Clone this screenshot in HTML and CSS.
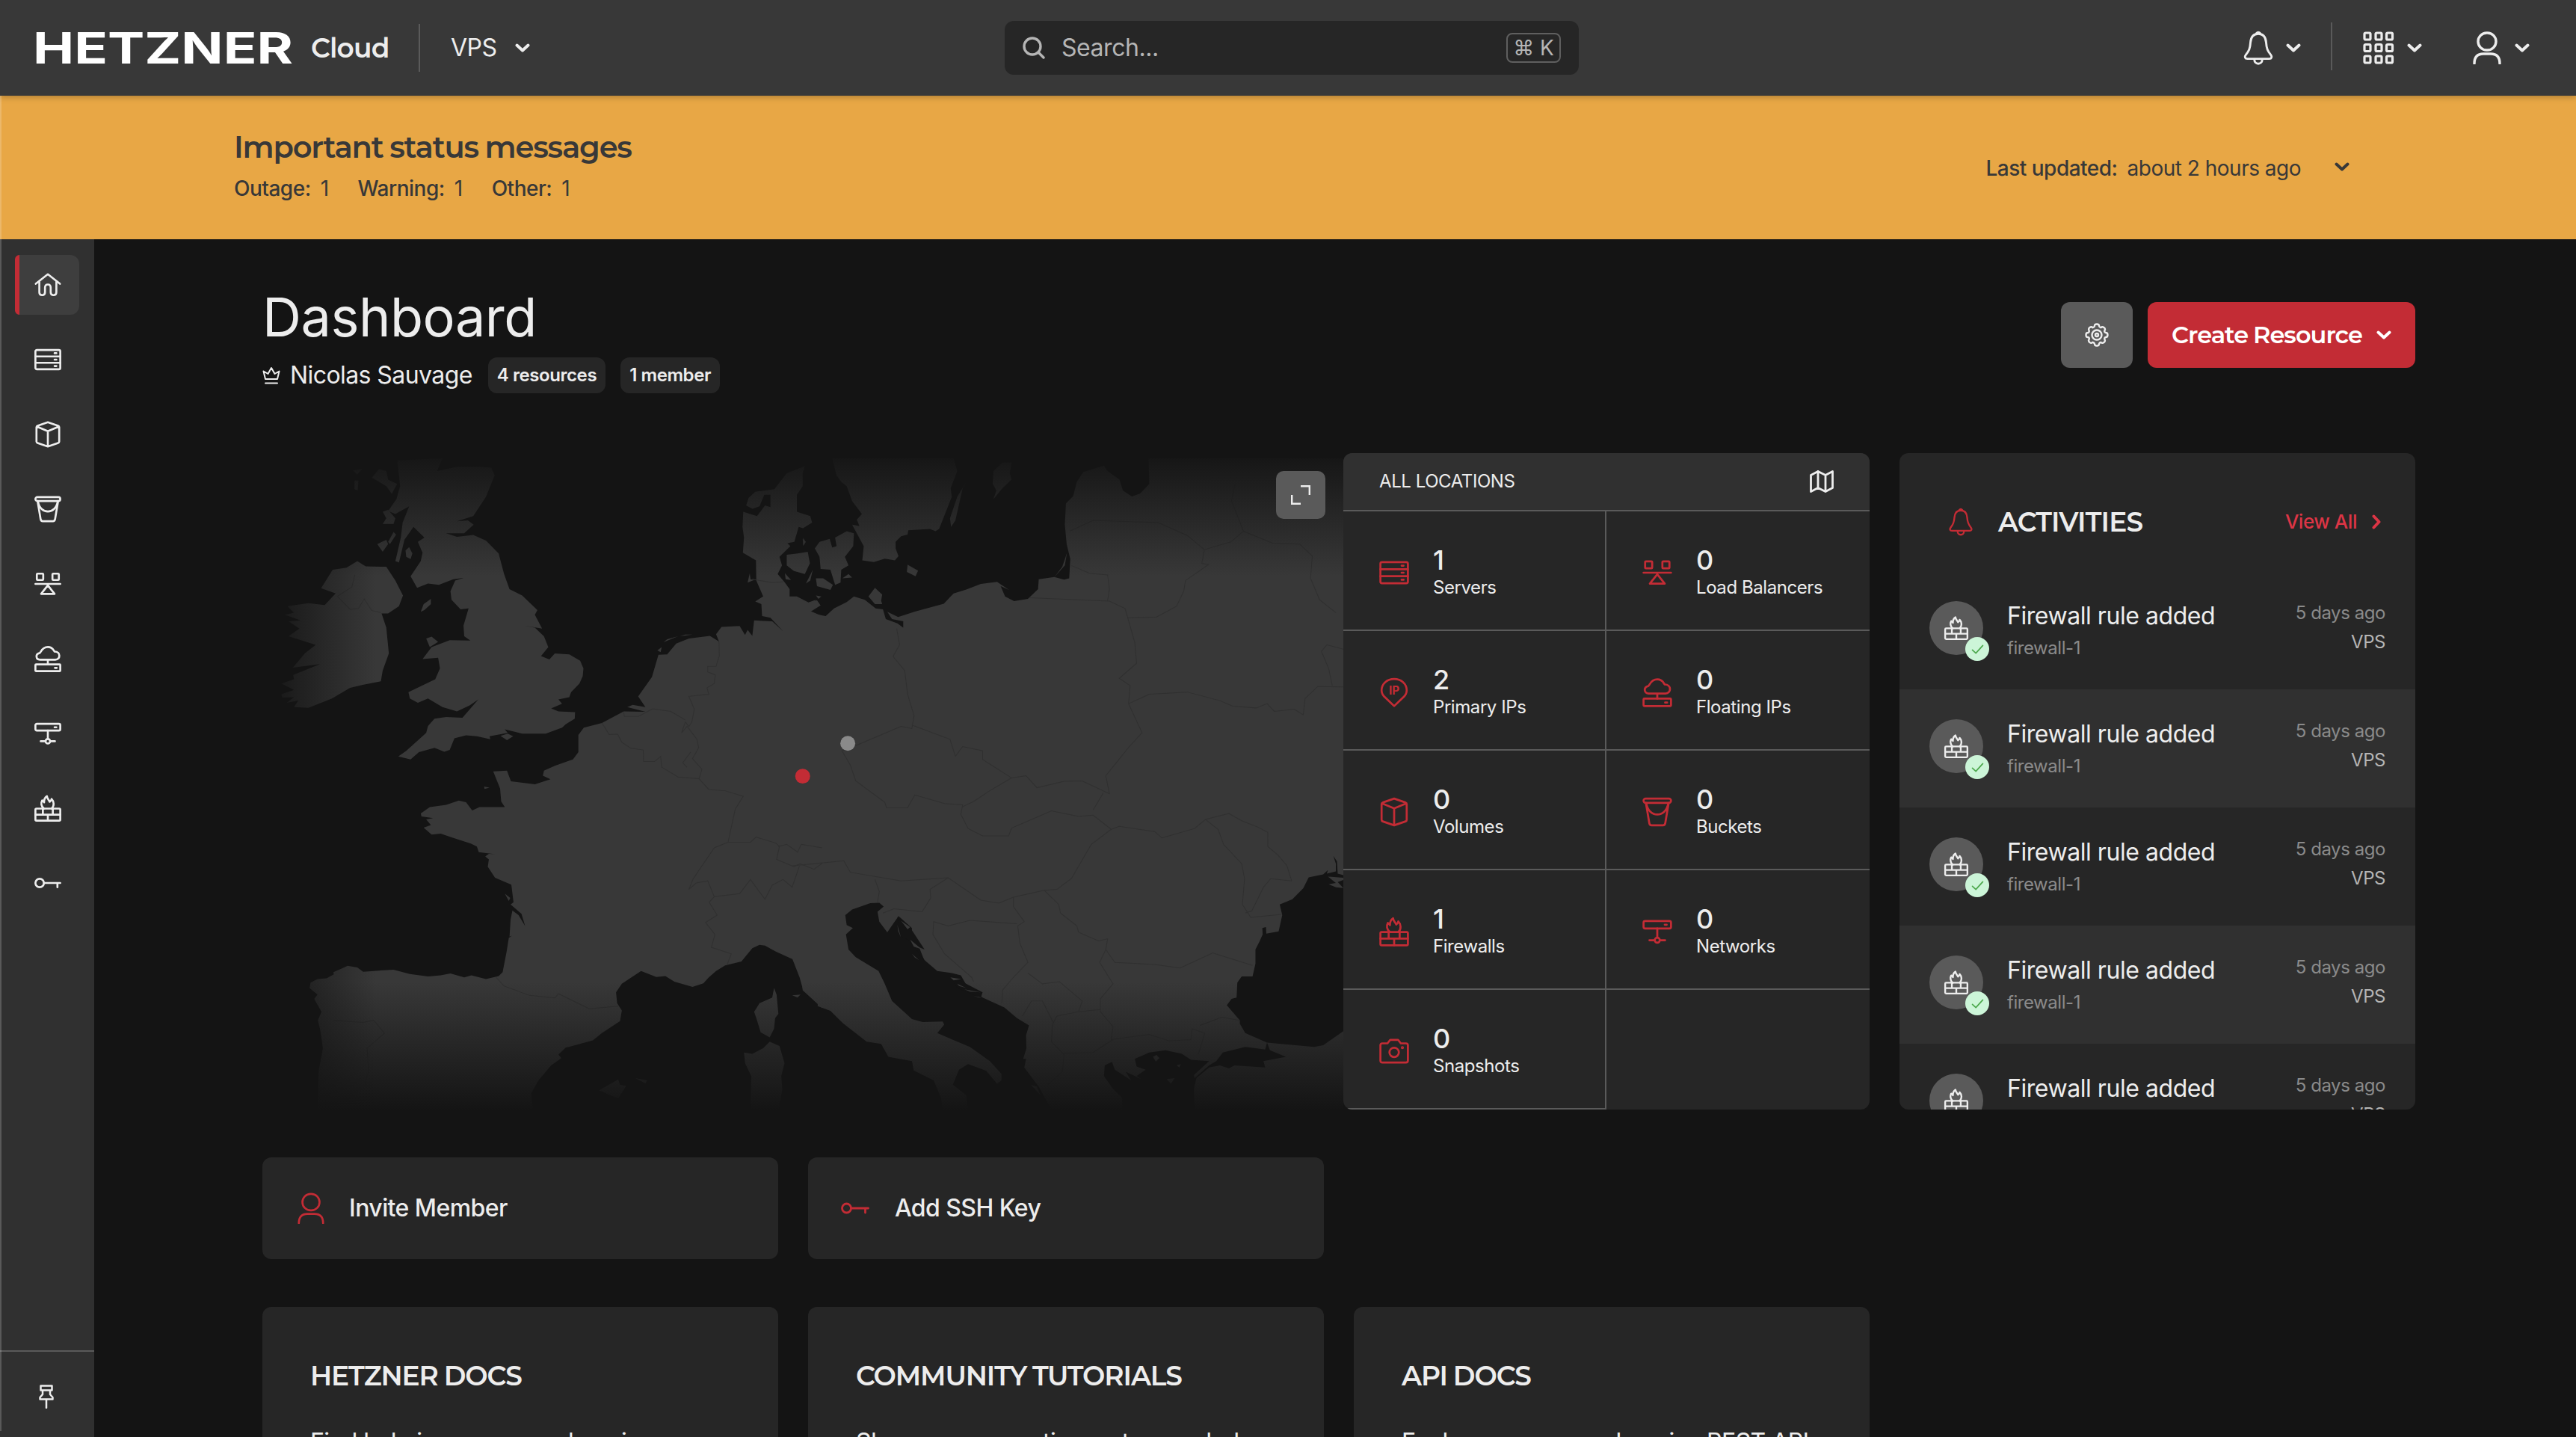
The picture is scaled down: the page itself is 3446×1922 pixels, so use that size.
FILE: index.html
```html
<!DOCTYPE html>
<html lang="en">
<head>
<meta charset="utf-8">
<title>Hetzner Cloud</title>
<link rel="stylesheet" href="styles.css">
</head>
<body>
<svg class="sprite" aria-hidden="true">
  <symbol id="chevron" viewBox="0 0 20 12"><path d="M2.5 2.5 10 9.5l7.500-7" stroke-width="4"/></symbol>
  <symbol id="home" viewBox="0 0 40 40"><path d="M3 18.500 20 5l17 13.500M8 15v15.500q0 4 4 4 4 0 4-4V24q0-4.500 4-4.500t4 4.500v6.500q0 4 4 4 4 0 4-4V15"/></symbol>
  <symbol id="server" viewBox="0 0 40 40"><rect x="2.500" y="6.500" width="35" height="27" rx="2"/><path d="M2.500 15.500h35M2.500 24.500h35M29.500 11h2.500M29.500 20h2.500M29.500 29h2.500"/></symbol>
  <symbol id="cube" viewBox="0 0 40 40"><path d="M20 3 34.500 8q1.500.6 1.500 2v20q0 1.500-1.500 2L20 37 5.500 32Q4 31.500 4 30V10q0-1.400 1.500-2ZM4.500 9 20 15.500 35.500 9M20 15.500V37"/></symbol>
  <symbol id="bucket" viewBox="0 0 40 40"><rect x="2.500" y="3" width="35" height="5.500" rx="2.700"/><path d="m5.500 8.500 4.300 25.500q.5 3 3 3h14.400q2.500 0 3-3l4.300-25.500M6 9c3 19 25 19 28 0"/></symbol>
  <symbol id="balancer" viewBox="0 0 40 40"><rect x="4.500" y="5.500" width="9" height="9" rx="1"/><rect x="26.500" y="5.500" width="9" height="9" rx="1"/><path d="M2.500 20h35M20 22 10.500 34h19Z"/></symbol>
  <symbol id="cloud" viewBox="0 0 40 40"><path d="M9 21.500c-6 0-7-8-.5-9.500 2-1 3-8.500 11.500-8.500 7 0 8 5 9.500 6.500 9 0 8.500 11.500 1 11.500ZM20 21.500V28M30 33h2.500"/><rect x="2.500" y="28" width="35" height="9.500" rx="1"/></symbol>
  <symbol id="network" viewBox="0 0 40 40"><rect x="2.500" y="6.500" width="35" height="9.500" rx="2"/><path d="M29.500 11.300H32M20 16v11.500M10 31h6.500M23.500 31H30"/><circle cx="20" cy="31" r="3.200"/></symbol>
  <symbol id="firewall" viewBox="0 0 40 40"><rect x="2.500" y="20.500" width="35" height="17" rx="1.500"/><path d="M2.500 29h35M13 20.500V29M27 20.500V29M20 29v8.500M14.500 20.500c-4-3-4.500-8-2.500-11.500 1 .5 2 1.500 2.700 2.800C14.500 8 16.500 4.500 18.700 3c0 3.500 2.800 5 4 8 1.500-1 2.400-2.500 2.600-4 3.500 3.500 4 9.500.2 13.500"/></symbol>
  <symbol id="key" viewBox="0 0 40 40"><circle cx="8.500" cy="20" r="6"/><path d="M14.500 20h23M33.500 20.500V26"/></symbol>
  <symbol id="bell" viewBox="0 0 40 44"><path d="M20 4c-7 0-9.500 5-10 11-.5 8-2 11-6 16-2 2.500-1 5 2 5h28c3 0 4-2.500 2-5-4-5-5.500-8-6-16-.5-6-3-11-10-11Zm-2.500-.5Q20 .5 22.500 3.500M15 37c0 7 10 7 10 0"/></symbol>
  <symbol id="user" viewBox="0 0 38 44"><rect x="7" y="2" width="24" height="23" rx="11.500"/><path d="M2 43c0-9 4-13 12-13h10c8 0 12 4 12 13"/></symbol>
  <symbol id="grid" viewBox="0 0 42 44"><g id="grid-row"><rect x="2" y="2" width="8" height="9" rx="1.500"/><rect x="17" y="2" width="8" height="9" rx="1.500"/><rect x="31.500" y="2" width="8" height="9" rx="1.500"/></g><use href="#grid-row" y="15.500"/><use href="#grid-row" y="31"/></symbol>
  <symbol id="search" viewBox="0 0 30 30"><circle cx="13" cy="13" r="11"/><path d="m21 21 7 7"/></symbol>
  <symbol id="pin" viewBox="0 0 20 32"><path d="M2.500 1.500h15v6h-15ZM5 7.500v5.500L1.500 17v2.500h17V17L15 13V7.500M10 19.500V31"/></symbol>
  <symbol id="crown" viewBox="0 0 24 24"><path d="M4 17 1.500 6.500 7.500 10 12 2l4.500 8 6-3.500L20 17ZM4 22.500h16"/></symbol>
  <symbol id="gear" viewBox="0 0 32 32"><path d="M13 4q0-2.500 3-2.500T19 4q.5 2 2.500 2.200Q23 4.500 25.500 6t.7 4.700Q25.800 12.500 28 13q2.500 0 2.500 3T28 19q-2 .5-1.800 2.300Q27.800 24.500 25.500 26t-4-.2Q19.500 26 19 28q0 2.500-3 2.500T13 28q-.5-2-2.500-2.200Q9 27.500 6.500 26t-.7-4.700Q6.200 19.500 4 19q-2.500 0-2.500-3T4 13q2-.5 1.800-2.300Q4.200 7.500 6.500 6t4 .2Q12.500 6 13 4Z"/><circle cx="16" cy="16" r="6.500"/><circle cx="16" cy="16" r="2"/></symbol>
  <symbol id="map-icon" viewBox="0 0 32 30"><path d="M1.500 6.500 11 1.500l10 5 9.500-5v22l-9.500 5-10-5-9.500 5ZM11 1.500v22M21 6.500v22"/></symbol>
  <symbol id="camera" viewBox="0 0 40 40"><path d="M5 10h6.500L15 5.500h10l3.500 4.500H35q2.500 0 2.500 2.500V32q0 2.500-2.500 2.500H5q-2.500 0-2.500-2.500V12.500Q2.500 10 5 10Z"/><circle cx="20" cy="21.500" r="6"/><circle cx="30.500" cy="15.500" r="1.200" stroke-width="1.500"/></symbol>
  <symbol id="check" viewBox="0 0 18 14"><path d="m1.500 8 5 4.500 10-11"/></symbol>
</svg>

<header class="topbar">
  <div class="brand">
    <svg class="logo" viewBox="0 0 342 42" role="img" aria-label="Hetzner"><text x="-4" y="42" textLength="348" lengthAdjust="spacingAndGlyphs">HETZNER</text></svg>
    <span class="product">Cloud</span>
    <span class="switcher">VPS <svg class="icon chevron"><use href="#chevron"/></svg></span>
  </div>
  <div class="search">
    <svg class="icon search-icon"><use href="#search"/></svg>
    <span class="placeholder">Search...</span>
    <kbd>⌘ K</kbd>
  </div>
  <div class="account">
    <svg class="icon bell"><use href="#bell"/></svg><svg class="icon chevron"><use href="#chevron"/></svg>
    <i class="separator"></i>
    <svg class="icon apps"><use href="#grid"/></svg><svg class="icon chevron"><use href="#chevron"/></svg>
    <svg class="icon profile"><use href="#user"/></svg><svg class="icon chevron"><use href="#chevron"/></svg>
  </div>
</header>

<section class="banner">
  <div>
    <h2>Important status messages</h2>
    <p class="counts"><span><b>Outage:</b>1</span><span><b>Warning:</b>1</span><span><b>Other:</b>1</span></p>
  </div>
  <p class="updated"><b>Last updated:</b>about 2 hours ago <svg class="icon chevron"><use href="#chevron"/></svg></p>
</section>

<div class="shell">
  <nav class="sidebar">
    <a class="active"><svg class="icon"><use href="#home"/></svg></a>
    <a><svg class="icon"><use href="#server"/></svg></a>
    <a><svg class="icon"><use href="#cube"/></svg></a>
    <a><svg class="icon"><use href="#bucket"/></svg></a>
    <a><svg class="icon"><use href="#balancer"/></svg></a>
    <a><svg class="icon"><use href="#cloud"/></svg></a>
    <a><svg class="icon"><use href="#network"/></svg></a>
    <a><svg class="icon"><use href="#firewall"/></svg></a>
    <a><svg class="icon"><use href="#key"/></svg></a>
    <div class="pinbar"><svg class="icon"><use href="#pin"/></svg></div>
  </nav>

  <main>
    <div class="heading">
      <div>
        <h1>Dashboard</h1>
        <div class="owner">
          <svg class="icon crown"><use href="#crown"/></svg>
          <span>Nicolas Sauvage</span>
          <em>4 resources</em><em>1 member</em>
        </div>
      </div>
      <div class="actions">
        <button class="settings"><svg class="icon"><use href="#gear"/></svg></button>
        <button class="create">Create Resource <svg class="icon chevron"><use href="#chevron"/></svg></button>
      </div>
    </div>

    <div class="overview">
      <div class="map">
        <svg class="europe" viewBox="23 28 2983 1530" preserveAspectRatio="none">
          <defs>
            <linearGradient id="fade-top" x2="0" y2="1"><stop stop-color="#141414"/><stop offset="1" stop-color="#141414" stop-opacity="0"/></linearGradient>
            <linearGradient id="fade-bottom" x2="0" y2="1"><stop stop-color="#141414" stop-opacity="0"/><stop offset="1" stop-color="#141414"/></linearGradient>
            <linearGradient id="fade-left"><stop stop-color="#141414"/><stop offset="1" stop-color="#141414" stop-opacity="0"/></linearGradient>
          </defs>
          <g class="land">
            <path d="M175 1558 178 1470 190 1415 182 1370 176 1350 186 1330 166 1300 175 1290 153 1275 156 1262 175 1254 200 1252 220 1243 219 1238 245 1228 258 1223 285 1227 301 1237 330 1235 385 1232 430 1242 480 1248 515 1245 542 1241 580 1250 600 1245 640 1254 675 1247 686 1238 697 1190 703 1158 712 1153 705 1155 708 1115 713 1094 730 1105 748 1130 738 1102 708 1080 716 1075 710 1034 665 1018 645 992 648 975 638 968 648 962 665 963 620 958 615 945 598 938 550 925 515 915 490 917 468 901 488 895 475 882 494 879 462 875 460 868 485 853 530 848 565 838 585 842 602 861 622 853 692 853 682 840 679 810 660 770 698 768 709 793 775 800 818 788 797 780 800 768 830 757 880 742 895 725 895 685 910 668 960 657 1020 630 1080 631 1030 620 1045 615 1080 620 1060 595 1098 550 1116 498 1140 497 1165 472 1200 460 1258 454 1283 467 1275 450 1290 433 1340 431 1355 452 1362 440 1375 454 1380 418 1430 420 1460 443 1425 412 1402 408 1400 380 1383 374 1405 362 1386 325 1385 278 1349 260 1352 225 1348 200 1350 165 1388 175 1410 150 1425 154 1425 125 1408 125 1395 152 1375 158 1358 150 1365 132 1383 118 1436 112 1470 75 1520 58 1514 75 1514 105 1498 125 1498 165 1535 175 1540 190 1515 203 1503 200 1491 235 1472 238 1480 245 1450 270 1457 290 1445 310 1465 330 1478 345 1478 362 1498 362 1530 376 1550 370 1535 396 1568 408 1568 1322 1540 1300 1514 1280 1512 1260 1492 1210 1440 1190 1410 1176 1395 1174 1375 1182 1345 1213 1300 1222 1275 1235 1255 1250 1240 1264 1210 1272 1160 1260 1135 1247 1110 1249 1068 1235 1015 1265 999 1285 1002 1310 1015 1327 1010 1352 960 1380 935 1397 860 1414 840 1430 848 1438 820 1455 785 1490 765 1520 770 1558Z"/>
            <path d="M395 45 520 40 505 70 560 60 625 60 655 62 664 80 640 130 605 175 560 187 590 185 606 195 580 215 530 215 560 223 605 219 640 232 675 262 690 310 705 345 740 360 782 394 775 405 795 437 745 430 775 435 800 455 812 480 792 501 815 509 830 495 870 497 900 512 909 530 907 548 898 565 875 585 870 597 840 602 850 612 820 623 840 630 886 632 885 647 860 660 850 668 805 682 740 682 692 672 700 680 650 688 652 695 615 688 585 686 553 693 540 720 525 724 498 715 455 725 432 742 398 735 420 722 475 680 480 664 498 647 530 643 575 645 619 602 595 616 560 630 520 620 480 600 452 610 430 600 426 585 500 555 513 530 508 505 465 508 490 480 540 464 597 465 580 455 578 430 592 390 570 392 545 370 542 350 555 325 578 319 550 322 510 335 480 332 450 342 432 315 460 280 465 260 452 235 470 225 440 200 415 230 400 283 390 280 405 225 410 190 428 152 390 170 370 163 393 135 403 105 400 80Z"/>
            <path d="M217 300 255 295 285 280 308 292 365 293 390 325 411 360 400 385 370 402 352 402 365 435 372 495 355 535 350 560 300 568 265 575 215 600 150 622 110 620 122 605 90 610 110 597 78 598 75 590 110 580 75 565 110 555 108 545 182 520 107 528 140 495 170 475 95 455 125 437 95 420 128 418 85 405 110 400 92 385 150 378 195 382 225 355 185 343Z"/>
            <path d="M460 398 468 380 488 368 488 380 470 394ZM475 460 490 456 508 468 485 480ZM680 687 700 682 715 688 698 697ZM325 85 345 65 365 70 370 90 395 100 380 123 365 105ZM355 165 370 160 390 180 385 193 355 193 365 180ZM340 240 365 230 370 240 355 258ZM370 235 385 212 392 218 375 240ZM418 255 428 247 437 262 432 275 420 270ZM272 68 298 65 285 78ZM277 92 288 92 286 115 277 112ZM692 1055 707 1065 703 1072ZM635 805 650 808 636 811Z"/>
            <path d="M1435 1275 1442 1290 1447 1335 1438 1345 1435 1370 1423 1390 1398 1378 1388 1350 1380 1330 1395 1310 1430 1297ZM1352 1425 1375 1428 1405 1415 1423 1400 1450 1410 1464 1450 1455 1480 1458 1510 1448 1558 1370 1558 1372 1480 1355 1450ZM952 1513 1005 1488 1010 1500 1027 1503 1005 1532 975 1522ZM1052 1485 1085 1490 1080 1497ZM1485 1292 1508 1290 1500 1297Z"/>
            <path d="M1470 265 1500 262 1528 258 1534 285 1520 310 1490 303 1470 290ZM1523 332 1542 300 1535 325ZM1465 308 1482 324 1467 322ZM1514 228 1523 235 1516 243ZM1362 330 1368 308 1370 322 1380 324ZM1113 488 1125 480 1122 492ZM1130 469 1170 455 1140 462ZM1175 455 1210 451 1190 451Z"/>
            <g transform="translate(1485.500)">
              <path d="M62 250 75 235 103 228 110 248 122 245 118 225 150 210 170 215 168 245 145 270 155 290 135 300 133 330 118 335 105 300 78 298 75 270ZM65 320 85 320 112 335 105 347 68 338ZM138 320 155 310 165 318ZM30 225 36 235 30 245ZM210 362 228 342 248 358 245 372 248 380 228 380ZM318 288 347 302 340 315 316 305ZM65 360 80 362 72 368Z"/>
              <path d="M110 40 445 40 455 70 437 110 440 130 405 205 395 210 380 205 320 208 318 218 300 222 285 235 285 250 293 268 283 278 255 274 225 282 193 278 197 245 165 195 185 198 178 183 192 170 165 140 150 105 135 95 122 80ZM480 95 470 110 450 185 438 200 435 180 455 130ZM555 70 580 50 605 50 600 75 605 90 580 110 555 135 563 115 553 100Z"/>
              <path d="M0 362 45 377 68 371 78 383 50 398 62 403 92 408 115 390 150 375 170 362 200 370 230 390 250 392 258 415 290 425 306 435 306 420 275 415 262 398 292 410 340 397 418 379 445 355 480 346 520 333 565 328 598 347 575 338 587 362 612 373 650 368 678 345 680 322 723 317 745 293 758 260 752 290 723 317 750 323 764 320 767 275 757 240 752 195 755 145 775 128 785 95 803 72 860 57 870 70 903 90 912 115 937 129 960 122 985 100 983 40 1521 40 1521 1012 1505 1008 1503 980 1493 967 1500 985 1500 1003 1475 1008 1478 1000 1465 1010 1425 1017 1410 1042 1380 1068 1345 1080 1352 1105 1342 1143 1308 1148 1307 1133 1297 1135 1298 1150 1290 1165 1278 1185 1278 1218 1270 1248 1240 1248 1228 1262 1226 1297 1212 1300 1199 1315 1235 1350 1235 1358 1250 1380 1310 1402 1305 1418 1250 1412 1188 1425 1170 1445 1150 1455 1110 1485 1108 1478 1150 1445 1100 1442 1075 1428 1030 1420 985 1425 945 1440 950 1458 975 1465 950 1480 965 1488 920 1470 935 1490 890 1465 882 1447 862 1455 860 1480 885 1510 910 1530 910 1558 715 1558 680 1505 640 1460 645 1440 637 1440 646 1415 645 1385 653 1362 620 1345 585 1320 525 1297 485 1275 475 1260 465 1245 440 1240 400 1235 365 1210 330 1165 330 1135 293 1107 262 1145 240 1120 235 1097 252 1085 240 1076 215 1077 165 1092 146 1105 150 1128 167 1135 148 1150 155 1185 175 1203 238 1235 255 1265 275 1305 330 1347 360 1354 415 1353 419 1360 400 1380 490 1412 545 1445 577 1475 577 1490 565 1498 535 1468 485 1452 460 1465 443 1500 480 1525 485 1558 415 1558 410 1530 390 1490 335 1467 330 1445 295 1440 265 1435 245 1405 205 1400 140 1357 105 1328 70 1317 70 1300 30 1280 20 1250 0 1207Z"/>
              <path d="M1521 1375 1465 1408 1440 1412 1310 1402 1318 1420 1362 1435 1300 1445 1305 1460 1220 1455 1205 1462 1180 1455 1150 1460 1115 1485 1108 1510 1110 1558 1521 1558ZM1478 1015 1521 1018 1521 1023 1505 1028 1521 1042 1500 1040 1480 1033 1500 1030ZM995 1435 1005 1431 1013 1438 1003 1446ZM1033 1487 1055 1485 1045 1498ZM1060 1455 1072 1452 1068 1460ZM658 1500 675 1505 685 1525Z"/>
            </g>
          </g>
          <g class="water" transform="translate(1485.500)">
            <path d="M290 1110 330 1140 365 1185 350 1180 365 1212 325 1165 300 1155ZM435 1245 525 1285 520 1298 455 1275Z"/>
          </g>
          <g class="land" transform="translate(1485.500)">
            <path d="M300 1118 325 1133 318 1138ZM290 1128 300 1157 292 1142ZM325 1162 358 1185 335 1178ZM330 1195 350 1210 338 1204ZM436 1250 466 1254 445 1257ZM455 1265 480 1275 460 1270ZM475 1278 520 1285 490 1283ZM500 1293 523 1297 515 1297Z"/>
          </g>
          <g class="borders">
            <path d="M278 312 270 340 230 362 265 392 288 390 304 368 325 395 350 400M1283 467 1284 500 1275 525 1252 525 1252 538 1273 545 1270 565 1250 575 1255 590 1200 595 1215 625 1208 655 1200 665 1190 655 1180 680 1195 665 1222 695 1227 715 1210 740 1236 765 1228 787M960 657 980 684 1003 683 1015 702 1040 716 1074 720 1075 747 1105 747 1122 735 1125 760 1170 783 1228 787 1255 812 1300 815 1350 828 1328 858 1308 935 1270 948 1212 1020 1200 1045 1220 1030 1252 1025 1270 1062 1256 1075 1278 1105 1246 1122 1272 1150 1262 1180 1317 1195 1305 1222M1195 760 1183 750 1205 725M1020 632 1022 642 1060 642 1100 624 1150 630 1190 650M1308 935 1370 935 1385 923 1440 937 1450 945 1442 975 1490 992 1507 985 1545 998 1568 984M1270 1062 1340 1055 1370 1022 1410 1068 1430 1035 1460 1022 1485 1040 1505 990M1447 945 1470 940 1500 958 1510 940 1568 948M668 1250 690 1270 760 1292 830 1298 840 1288 925 1323 1005 1317M1375 322 1430 330 1460 328M220 1350 300 1355 330 1350 360 1380 312 1415 316 1470 305 1500"/>
            <path transform="translate(1485.500)" d="M288 437 296 475 278 502 310 535 318 590 336 640 330 670 300 665 180 708 137 722 160 755 175 792 255 842 260 855 318 855 338 825 420 845 470 848 465 870 485 903 525 920 597 920 605 902 715 862 790 875 830 872 880 905 825 940 770 1020 730 1045 695 1047 610 1063 570 1077 520 1070 430 1018 300 1025 160 1005 142 978 60 985 0 990M330 662 435 695 450 735 470 712 525 722 525 742 605 785 545 815 500 840 470 852M605 785 645 780 675 808 750 793 800 792 875 822 865 780 930 712 965 680 928 612 932 570 902 553 950 518 945 470 925 410 918 390 875 373 655 365M770 290 820 308 870 312 875 345 870 372M925 412 1005 410 1060 385 1080 350 1085 325 1148 288 1130 285 1137 253 1090 220 1010 190 830 185 765 210M1137 253 1210 235 1245 210 1212 140 1222 100M1245 210 1325 238 1400 240 1435 268 1430 320 1455 370 1500 400M928 612 985 590 1090 585 1180 605 1215 618 1280 622 1310 612 1330 630 1385 625 1410 638 1415 600 1450 572 1521 573M1521 485 1475 475 1460 490 1480 530 1490 570M830 860 858 820M880 905 902 898 1000 910 1020 925 1110 903 1140 882 1205 868 1240 885 1285 900 1312 912 1312 945 1340 965 1365 990 1378 1025 1320 1020 1300 1040 1268 1095 1250 1100M1140 882 1175 905 1190 940 1240 985 1248 1020 1242 1080 1265 1110 1350 1103M695 1047 735 1080 740 1100 785 1130 790 1145 845 1165 870 1160 865 1185 890 1215 1000 1220 1070 1228 1160 1193 1270 1222M865 1185 848 1215 885 1265 850 1300 850 1330 885 1365 880 1395 985 1383 1040 1398 1100 1395 1103 1370 1138 1380 1120 1430M1125 1362 1185 1343 1235 1350M610 1063 610 1085 640 1120 622 1130 628 1170 650 1215 610 1250 580 1280 578 1310M620 1125 490 1117 430 1130 390 1120 388 1150 420 1195 495 1250 500 1260M430 1018 380 1045 382 1065 358 1097 280 1090 250 1100M228 1022 240 1050 235 1075M650 1240 690 1265 737 1260 800 1305 790 1330 730 1340 718 1360 715 1400 750 1430 745 1470 705 1500M635 1340 660 1305 690 1305 720 1355M750 1427 830 1425 885 1395M790 1330 850 1325"/>
          </g>
          <rect x="0" y="20" width="3020" height="295" fill="url(#fade-top)"/>
          <rect x="0" y="1260" width="3020" height="300" fill="url(#fade-bottom)"/>
          <rect x="20" y="20" width="315" height="1540" fill="url(#fade-left)"/>
          <ellipse class="site" cx="1514" cy="781" rx="20.600" ry="17.400"/>
          <ellipse class="site idle" cx="1638.500" cy="704.500" rx="20.600" ry="17.400"/>
        </svg>
        <button class="expand"><svg class="icon" viewBox="0 0 26 26"><path d="M13 1.200h11.800V13M1.200 13v11.800H13"/></svg></button>
      </div>

      <section class="locations">
        <header><span>ALL LOCATIONS</span><svg class="icon"><use href="#map-icon"/></svg></header>
        <div class="cells">
          <div><svg class="icon"><use href="#server"/></svg><p><b>1</b>Servers</p></div>
          <div><svg class="icon"><use href="#balancer"/></svg><p><b>0</b>Load Balancers</p></div>
          <div><svg class="icon" viewBox="0 0 40 40"><path d="M20 37.500 9 27C4.500 23 4 19 4 17.500 4 9 11 3 20 3s16 6 16 14.500c0 1.500-.5 5.500-5 9.500Z"/><text x="20" y="23" class="ip-label">IP</text></svg><p><b>2</b>Primary IPs</p></div>
          <div><svg class="icon"><use href="#cloud"/></svg><p><b>0</b>Floating IPs</p></div>
          <div><svg class="icon"><use href="#cube"/></svg><p><b>0</b>Volumes</p></div>
          <div><svg class="icon"><use href="#bucket"/></svg><p><b>0</b>Buckets</p></div>
          <div><svg class="icon"><use href="#firewall"/></svg><p><b>1</b>Firewalls</p></div>
          <div><svg class="icon"><use href="#network"/></svg><p><b>0</b>Networks</p></div>
          <div><svg class="icon"><use href="#camera"/></svg><p><b>0</b>Snapshots</p></div>
        </div>
      </section>

      <section class="activities">
        <header><svg class="icon"><use href="#bell"/></svg><h3>ACTIVITIES</h3><a>View All<svg class="icon chevron"><use href="#chevron"/></svg></a></header>
        <ul>
          <li><span class="avatar"><svg class="icon"><use href="#firewall"/></svg><i><svg class="icon"><use href="#check"/></svg></i></span><p class="what">Firewall rule added<small>firewall-1</small></p><p class="when">5 days ago<span>VPS</span></p></li>
          <li><span class="avatar"><svg class="icon"><use href="#firewall"/></svg><i><svg class="icon"><use href="#check"/></svg></i></span><p class="what">Firewall rule added<small>firewall-1</small></p><p class="when">5 days ago<span>VPS</span></p></li>
          <li><span class="avatar"><svg class="icon"><use href="#firewall"/></svg><i><svg class="icon"><use href="#check"/></svg></i></span><p class="what">Firewall rule added<small>firewall-1</small></p><p class="when">5 days ago<span>VPS</span></p></li>
          <li><span class="avatar"><svg class="icon"><use href="#firewall"/></svg><i><svg class="icon"><use href="#check"/></svg></i></span><p class="what">Firewall rule added<small>firewall-1</small></p><p class="when">5 days ago<span>VPS</span></p></li>
          <li><span class="avatar"><svg class="icon"><use href="#firewall"/></svg><i><svg class="icon"><use href="#check"/></svg></i></span><p class="what">Firewall rule added<small>firewall-1</small></p><p class="when">5 days ago<span>VPS</span></p></li>
        </ul>
      </section>
    </div>

    <div class="row quick">
      <a class="card"><svg class="icon member"><use href="#user"/></svg>Invite Member</a>
      <a class="card"><svg class="icon ssh"><use href="#key"/></svg>Add SSH Key</a>
    </div>
    <div class="row docs">
      <section class="card"><h3>HETZNER DOCS</h3><p>Find help in our comprehensive</p></section>
      <section class="card"><h3>COMMUNITY TUTORIALS</h3><p>Share your expertise, get rewarded</p></section>
      <section class="card"><h3>API DOCS</h3><p>Explore our comprehensive REST API</p></section>
    </div>
  </main>
</div>
<div class="window-edge"></div>
</body>
</html>
```
FILE: styles.css
```css
* { box-sizing: border-box; }
body {
  margin: 0;
  width: 3446px;
  height: 1922px;
  overflow: hidden;
  display: flex;
  flex-direction: column;
  background: #141414;
  color: #ededed;
  font: 400 32px/40px Inter, "Liberation Sans", sans-serif;
}
p, a, em, .owner { letter-spacing: -.018em; }
h1, h2, h3, p, ul { margin: 0; padding: 0; }
h2, h3, .product, .create {
  font-family: Montserrat, Inter, sans-serif;
  font-weight: 600;
  letter-spacing: -.03em;
  word-spacing: -.03em;
}
em, i { font-style: normal; }
button { border: 0; padding: 0; color: inherit; font: inherit; }
.sprite { position: absolute; width: 0; height: 0; }
.icon {
  display: block;
  flex: none;
  overflow: visible;
  fill: none;
  stroke: currentColor;
  stroke-width: 2.8;
  stroke-linecap: round;
  stroke-linejoin: round;
}
.chevron { width: 20px; height: 12px; }

/* Top bar */
.topbar {
  position: relative;
  z-index: 1;
  flex: none;
  height: 128px;
  display: grid;
  grid-template-columns: 1344px 768px 1fr;
  align-items: center;
  background: #383838;
  box-shadow: 0 2px 8px rgba(0, 0, 0, .25);
}
.brand { display: flex; align-items: center; padding-left: 48px; }
.logo { width: 342px; height: 42px; overflow: visible; fill: #fff; }
.logo text { font: 700 57.800px Inter, sans-serif; }
.product { margin-left: 26px; width: 118px; font-size: 36px; letter-spacing: -.023em; }
.switcher {
  display: flex;
  align-items: center;
  gap: 24px;
  height: 64px;
  margin-left: 26px;
  padding-left: 41px;
  border-left: 2px solid #5a5a5a;
  letter-spacing: -.015em;
}
.search {
  display: flex;
  align-items: center;
  height: 72px;
  padding: 0 24px;
  border-radius: 12px;
  background: #262626;
  color: #b5b5b5;
}
.search-icon { width: 30px; height: 30px; stroke-width: 3.4; }
.placeholder { flex: 1; margin-left: 22px; letter-spacing: -.014em; }
kbd {
  width: 73px;
  height: 40px;
  border: 2px solid #5f5f5f;
  border-radius: 8px;
  font: 28px/36px Inter, sans-serif;
  text-align: center;
}
.account { display: flex; align-items: center; justify-content: flex-end; padding-right: 62px; }
.bell { width: 42px; height: 46px; margin-right: 16px; }
.separator { width: 2px; height: 64px; margin: 0 41px 4px 40px; background: #5a5a5a; }
.apps { width: 42px; height: 44px; margin-right: 17px; stroke-width: 3.2; }
.profile { width: 38px; height: 44px; margin: 0 18px 0 68px; stroke-width: 3.4; }

/* Status banner */
.banner {
  flex: none;
  height: 192px;
  display: flex;
  justify-content: space-between;
  align-items: center;
  padding: 0 303px 0 313px;
  background: #e8a745;
  color: #383838;
  font-size: 28px;
}
.banner h2 { margin-top: -4px; font-size: 40px; line-height: 48px; }
.banner b { margin-right: 13px; font-weight: 500; }
.counts { display: flex; gap: 39px; margin-top: 11px; line-height: 40px; }
.updated { display: flex; align-items: center; margin-top: 1px; }
.updated .icon { margin: 0 0 4px 45px; }

/* Sidebar */
.shell { flex: 1; display: flex; min-height: 0; overflow: hidden; }
.sidebar {
  flex: none;
  width: 126px;
  display: flex;
  flex-direction: column;
  align-items: center;
  gap: 20px;
  padding-top: 21px;
  background: #303030;
}
.sidebar a {
  flex: none;
  width: 86px;
  height: 80px;
  display: flex;
  align-items: center;
  justify-content: center;
  padding-left: 2px;
}
.sidebar a .icon { width: 38px; height: 38px; }
.sidebar .active { padding-right: 4px; border-left: 6px solid #c32c35; border-radius: 6px 12px 12px 6px; background: #3e3e3e; padding-left: 0; }
.pinbar {
  align-self: stretch;
  height: 116px;
  margin-top: auto;
  padding: 44px 0 0 52px;
  border-top: 2px solid #5a5a5a;
}
.pinbar .icon { width: 20px; height: 32px; stroke-width: 2.5; }

/* Page heading */
main { flex: 1; padding: 60px 215px 0 225px; }
.heading { display: flex; justify-content: space-between; height: 226px; }
h1 { font-size: 72px; font-weight: 400; line-height: 88px; letter-spacing: -.007em; }
.owner { display: flex; align-items: center; margin-top: 10px; height: 48px; }
.crown { width: 24px; height: 24px; margin-right: 13px; stroke-width: 2; }
.owner em {
  height: 48px;
  margin-left: 20px;
  padding: 0 12px;
  border-radius: 12px;
  background: #262626;
  font-size: 24px;
  font-weight: 600;
  line-height: 47px;
  letter-spacing: -.018em;
}
.owner span + em { margin-left: 21px; }
.actions { display: flex; gap: 20px; margin-top: 24px; height: 88px; }
.settings { display: flex; align-items: center; justify-content: center; width: 96px; border-radius: 12px; background: #5a5a5a; }
.settings .icon { width: 32px; height: 32px; stroke-width: 2.4; }
.create {
  display: flex;
  align-items: center;
  justify-content: space-between;
  width: 358px;
  padding: 0 32px;
  border-radius: 12px;
  background: #c32c35;
  color: #fff;
}

/* Overview row */
.overview { display: grid; grid-template-columns: 1446px 704px 730px; height: 878px; }
.map { position: relative; overflow: hidden; }
.europe { display: block; width: 1446px; height: 878px; }
.land { fill: #383838; }
.water { fill: #141414; }
.borders path { fill: none; stroke: #303030; stroke-width: 1; vector-effect: non-scaling-stroke; }
.site { fill: #c32c35; }
.site.idle { fill: #8a8a8a; }
.expand {
  position: absolute;
  top: 24px;
  right: 24px;
  width: 66px;
  height: 64px;
  padding: 0 20px;
  border-radius: 10px;
  background: #5a5a5a;
}
.expand .icon { width: 26px; height: 26px; stroke-width: 2.4; stroke-linecap: butt; stroke-linejoin: miter; }

.locations { overflow: hidden; border-radius: 12px; background: #262626; font-size: 24px; line-height: 34px; }
.locations header {
  display: flex;
  align-items: center;
  justify-content: space-between;
  height: 78px;
  padding: 0 48px 1px 48px;
  border-bottom: 2px solid #5a5a5a;
  background: #303030;
  letter-spacing: -.018em;
}
.locations header .icon { width: 32px; height: 30px; }
.cells { display: grid; grid-template-columns: 352px 352px; }
.cells div {
  display: flex;
  align-items: center;
  gap: 31px;
  height: 160px;
  padding: 5px 0 0 47px;
  border-bottom: 2px solid #5a5a5a;
}
.cells div:nth-child(odd) { border-right: 2px solid #5a5a5a; }
.cells .icon { width: 42px; height: 42px; color: #c32c35; stroke-width: 2.6; }
.cells b { display: block; font-size: 36px; font-weight: 500; line-height: 40px; }
.ip-label { font: 700 14.500px Inter, sans-serif; text-anchor: middle; fill: currentColor; stroke: none; }

.activities { overflow: hidden; margin-left: 40px; width: 690px; border-radius: 12px; background: #262626; }
.activities header { display: flex; align-items: center; height: 158px; padding: 25px 42px 0 65px; }
.activities header > .icon { width: 34px; height: 38px; margin-right: 33px; color: #c32c35; }
.activities h3 { flex: 1; font-size: 36px; letter-spacing: -.023em; }
.activities a { display: flex; align-items: center; gap: 16px; color: #dc3545; font-size: 26px; font-weight: 500; }
.activities a .icon { transform: rotate(-90deg); }
.activities ul { list-style: none; }
.activities li { display: flex; height: 158px; padding: 40px 40px 0; }
.activities li:nth-child(even) { background: #303030; }
.avatar { position: relative; display: flex; align-items: center; justify-content: center; width: 72px; height: 72px; border-radius: 50%; background: #5a5a5a; }
.avatar > .icon { width: 34px; height: 34px; }
.avatar i {
  position: absolute;
  right: -8px;
  bottom: -8px;
  display: flex;
  align-items: center;
  justify-content: center;
  width: 32px;
  height: 32px;
  border-radius: 50%;
  background: #ccf5d8;
  color: #4ca84c;
}
.avatar i .icon { width: 17px; height: 13px; stroke-width: 1.8; }
.what { flex: 1; margin-left: 32px; letter-spacing: -.014em; }
.what small { display: block; color: #8a8a8a; font-size: 24px; line-height: 46px; }
.when { margin-top: -4px; color: #8a8a8a; font-size: 24px; line-height: 39px; text-align: right; }
.when span { display: block; color: #b5b5b5; }

/* Cards */
.row { display: grid; grid-template-columns: repeat(3, 690px); gap: 40px; margin-top: 64px; }
.card { border-radius: 12px; background: #262626; }
.quick .card { display: flex; align-items: center; height: 136px; padding-left: 46px; font-weight: 500; font-size: 32px; }
.quick .icon { color: #c32c35; }
.member { width: 38px; height: 42px; margin-right: 32px; }
.ssh { width: 40px; height: 40px; margin: 0 33px 0 -3px; }
.docs .card { height: 174px; padding: 68px 64px 0; border-radius: 12px 12px 0 0; white-space: nowrap; }
.docs h3 { font-size: 36px; line-height: 48px; }
.docs p { margin-top: 45px; }

/* Thin light rim along the window's left side */
.window-edge {
  position: absolute;
  left: 0;
  top: 0;
  width: 2px;
  height: 1914px;
  background: rgba(255, 255, 255, .2);
}
```
